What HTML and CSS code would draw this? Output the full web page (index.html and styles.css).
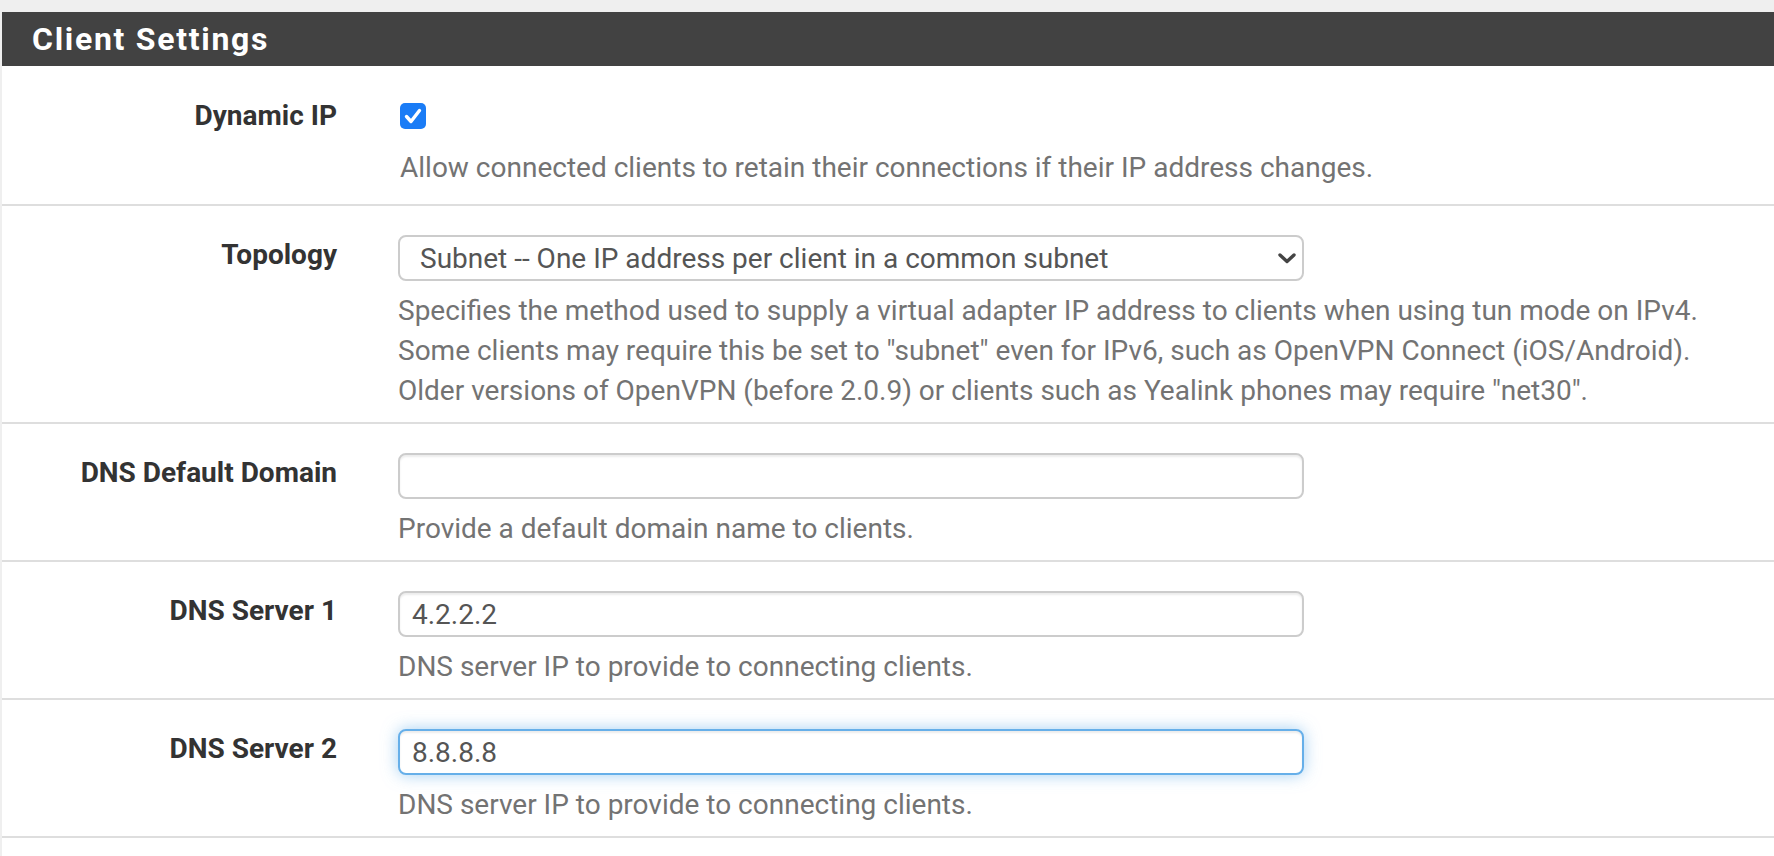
FILE: index.html
```html
<!DOCTYPE html>
<html lang="en">
<head>
<meta charset="utf-8">
<title>Client Settings</title>
<link rel="stylesheet" href="styles.css">
</head>
<body>
<div class="panel">
  <div class="panel-heading"><h2 class="panel-title">Client Settings</h2></div>
  <div class="panel-body">
    <div class="form-row form-row-check">
      <div class="control-label">Dynamic IP</div>
      <div class="field">
        <div class="check-line">
          <span class="checkbox">
            <svg viewBox="0 0 26 26" width="26" height="26" aria-hidden="true">
              <rect x="0" y="0" width="26" height="26" rx="5" ry="5" fill="#1a7cf6"/>
              <path d="M6.5 13.5 L11 18.5 L19.5 7.5" fill="none" stroke="#fff" stroke-width="3.4" stroke-linecap="round" stroke-linejoin="round"/>
            </svg>
          </span>
        </div>
        <div class="help help-check">Allow connected clients to retain their connections if their IP address changes.</div>
      </div>
    </div>

    <div class="form-row">
      <div class="control-label">Topology</div>
      <div class="field">
        <div class="select-wrap">
          <select class="form-control select">
            <option>Subnet -- One IP address per client in a common subnet</option>
          </select>
          <svg class="chevron" viewBox="0 0 18 11" width="18" height="11" aria-hidden="true">
            <path d="M2 2 L9 8.5 L16 2" fill="none" stroke="#444" stroke-width="3.4" stroke-linecap="round" stroke-linejoin="round"/>
          </svg>
        </div>
        <div class="help">Specifies the method used to supply a virtual adapter IP address to clients when using tun mode on IPv4.<br>Some clients may require this be set to "subnet" even for IPv6, such as OpenVPN Connect (iOS/Android).<br>Older versions of OpenVPN (before 2.0.9) or clients such as Yealink phones may require "net30".</div>
      </div>
    </div>

    <div class="form-row">
      <div class="control-label">DNS Default Domain</div>
      <div class="field">
        <input class="form-control" type="text" value="">
        <div class="help">Provide a default domain name to clients.</div>
      </div>
    </div>

    <div class="form-row">
      <div class="control-label">DNS Server 1</div>
      <div class="field">
        <input class="form-control" type="text" value="4.2.2.2">
        <div class="help">DNS server IP to provide to connecting clients.</div>
      </div>
    </div>

    <div class="form-row">
      <div class="control-label">DNS Server 2</div>
      <div class="field">
        <input class="form-control is-focused" type="text" value="8.8.8.8">
        <div class="help">DNS server IP to provide to connecting clients.</div>
      </div>
    </div>
  </div>
</div>
</body>
</html>
```

FILE: styles.css
```css
* {
  box-sizing: border-box;
}

html, body {
  margin: 0;
  padding: 0;
}

body {
  background: #efefef;
  font-family: Roboto, "Liberation Sans", Arial, sans-serif;
  overflow: hidden;
}

.panel {
  margin: 12px 0 0 2px;
  background: #ffffff;
  min-height: 844px;
}

.panel-heading {
  background: #424242;
  height: 54px;
  padding-left: 30px;
}

.panel-title {
  margin: 0;
  color: #ffffff;
  font-size: 32px;
  font-weight: 700;
  letter-spacing: 1.7px;
  line-height: 54px;
}

.panel-body {
  padding: 0;
}

.form-row {
  display: flex;
  align-items: flex-start;
  padding: 29px 0 11px;
  border-bottom: 2px solid #dedede;
}

.form-row-check {
  padding: 30px 0 16px;
}

.control-label {
  flex: 0 0 335px;
  text-align: right;
  font-size: 28px;
  font-weight: 700;
  line-height: 40px;
  color: #333333;
}

.field {
  flex: 1 1 auto;
  margin-left: 61px;
}

.check-line {
  height: 40px;
  display: flex;
  align-items: center;
  padding-left: 2px;
}

.checkbox {
  display: block;
  width: 26px;
  height: 26px;
}

.checkbox svg {
  display: block;
}

.help {
  margin-top: 10px;
  font-size: 28px;
  line-height: 40px;
  color: #737373;
  white-space: nowrap;
}

.help-check {
  margin-top: 12px;
  padding-left: 2px;
}

.form-control {
  display: block;
  width: 906px;
  height: 46px;
  margin: 0;
  padding: 0 12px;
  border: 2px solid #cccccc;
  border-radius: 8px;
  background: #ffffff;
  box-shadow: inset 0 2px 2px rgba(0, 0, 0, 0.075);
  font-family: Roboto, "Liberation Sans", Arial, sans-serif;
  font-size: 28px;
  color: #555555;
  outline: none;
}

.form-control.is-focused {
  border-color: #66afe9;
  box-shadow: inset 0 2px 2px rgba(0, 0, 0, 0.075), 0 0 16px rgba(102, 175, 233, 0.6);
}

.select-wrap {
  position: relative;
  width: 906px;
}

.select {
  appearance: none;
  -webkit-appearance: none;
  padding-left: 20px;
  box-shadow: none;
  background: #ffffff;
}

.chevron {
  position: absolute;
  right: 8px;
  top: 18px;
}
```
